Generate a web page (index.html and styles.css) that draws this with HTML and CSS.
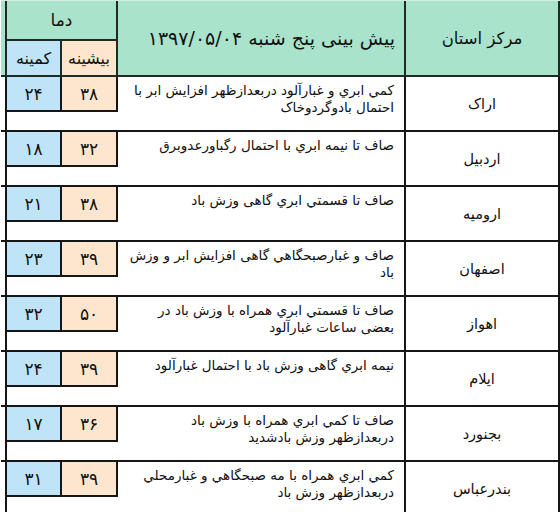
FILE: index.html
```html
<!DOCTYPE html>
<html lang="fa" dir="rtl">
<head>
<meta charset="utf-8">
<title>پیش بینی</title>
<link rel="stylesheet" href="styles.css">
</head>
<body>
<div class="sheet">
  <div class="head">
    <div class="hcity">مرکز استان</div>
    <div class="htitle">پیش بینی پنج شنبه ۱۳۹۷/۰۵/۰۴</div>
    <div class="htemp">
      <div class="hdama">دما</div>
      <div class="hsub">
        <div class="hmax">بیشینه</div>
        <div class="hmin">کمینه</div>
      </div>
    </div>
  </div>

  <div class="row">
    <div class="city">اراک</div>
    <div class="fc">کمي ابري و غبارآلود دربعدازظهر افزايش ابر با<br>احتمال بادوگردوخاک</div>
    <div class="temps"><div class="box"><div class="tmax">۳۸</div><div class="tmin">۲۴</div></div></div>
  </div>
  <div class="row">
    <div class="city">اردبيل</div>
    <div class="fc">صاف تا نيمه ابري با احتمال رگباورعدوبرق</div>
    <div class="temps"><div class="box"><div class="tmax">۳۲</div><div class="tmin">۱۸</div></div></div>
  </div>
  <div class="row">
    <div class="city">اروميه</div>
    <div class="fc">صاف تا قسمتي ابري گاهی وزش باد</div>
    <div class="temps"><div class="box"><div class="tmax">۳۸</div><div class="tmin">۲۱</div></div></div>
  </div>
  <div class="row">
    <div class="city">اصفهان</div>
    <div class="fc">صاف و غبارصبحگاهي گاهی افزايش ابر و وزش<br>باد</div>
    <div class="temps"><div class="box"><div class="tmax">۳۹</div><div class="tmin">۲۳</div></div></div>
  </div>
  <div class="row">
    <div class="city">اهواز</div>
    <div class="fc">صاف تا قسمتي ابري همراه با وزش باد در<br>بعضی ساعات غبارآلود</div>
    <div class="temps"><div class="box"><div class="tmax">۵۰</div><div class="tmin">۳۲</div></div></div>
  </div>
  <div class="row">
    <div class="city">ايلام</div>
    <div class="fc">نيمه ابري گاهی وزش باد با احتمال غبارآلود</div>
    <div class="temps"><div class="box"><div class="tmax">۳۹</div><div class="tmin">۲۴</div></div></div>
  </div>
  <div class="row">
    <div class="city">بجنورد</div>
    <div class="fc">صاف تا کمي ابري همراه با وزش باد<br>دربعدازظهر وزش بادشديد</div>
    <div class="temps"><div class="box"><div class="tmax">۳۶</div><div class="tmin">۱۷</div></div></div>
  </div>
  <div class="row">
    <div class="city">بندرعباس</div>
    <div class="fc">کمي ابري همراه با مه صبحگاهي و غبارمحلي<br>دربعدازظهر وزش باد</div>
    <div class="temps"><div class="box"><div class="tmax">۳۹</div><div class="tmin">۳۱</div></div></div>
  </div>
</div>
</body>
</html>
```

FILE: styles.css
```css
html, body {
  margin: 0;
  padding: 0;
  background: #ffffff;
}

body {
  font-family: "DejaVu Sans", "Noto Sans", sans-serif;
  color: #111111;
  overflow: hidden;
}

.sheet {
  width: 559px;
  direction: rtl;
}

.head {
  display: flex;
  height: 74px;
  padding-left: 4px;
  background: #aae3cb;
  border-top: 1px solid #d3eee1;
  border-bottom: 2px solid #1f2a25;
}

.hcity {
  width: 152px;
  border-left: 2px solid #1f2a25;
  border-right: 2px solid #1f2a25;
  display: flex;
  align-items: center;
  justify-content: center;
  font-size: 16.5px;
}

.htitle {
  width: 277px;
  padding-right: 9px;
  display: flex;
  align-items: center;
  font-size: 19px;
  white-space: nowrap;
}

.htemp {
  width: 109px;
  border-left: 2px solid #1f2a25;
  border-right: 2px solid #1f2a25;
  display: flex;
  flex-direction: column;
}

.hdama {
  height: 38px;
  border-bottom: 2px solid #1f2a25;
  display: flex;
  align-items: center;
  justify-content: center;
  font-size: 17px;
}

.hsub {
  display: flex;
  height: 34px;
}

.hmax {
  width: 54px;
  border-left: 2px solid #1f2a25;
  background: #fde6cd;
  display: flex;
  align-items: center;
  justify-content: center;
  font-size: 16px;
  white-space: nowrap;
}

.hmin {
  width: 53px;
  background: #bfe4f7;
  display: flex;
  align-items: center;
  justify-content: center;
  font-size: 16px;
  white-space: nowrap;
}

.row {
  display: flex;
  height: 53px;
  padding-left: 4px;
  border-bottom: 2px solid #161616;
}

.city {
  width: 152px;
  border-left: 2px solid #161616;
  border-right: 2px solid #161616;
  display: flex;
  align-items: center;
  justify-content: center;
  font-size: 14.5px;
}

.fc {
  width: 270px;
  padding: 5px 10px 0 6px;
  font-size: 13.5px;
  line-height: 17px;
  white-space: nowrap;
}

.temps {
  width: 111px;
  border-left: 2px solid #161616;
}

.box {
  display: flex;
  height: 33px;
  border-bottom: 2px solid #161616;
}

.tmax {
  width: 54px;
  border-left: 2px solid #161616;
  border-right: 2px solid #161616;
  background: #fde6cd;
  display: flex;
  align-items: center;
  justify-content: center;
  font-size: 17px;
}

.tmin {
  width: 53px;
  background: #bfe4f7;
  display: flex;
  align-items: center;
  justify-content: center;
  font-size: 17px;
}
```
